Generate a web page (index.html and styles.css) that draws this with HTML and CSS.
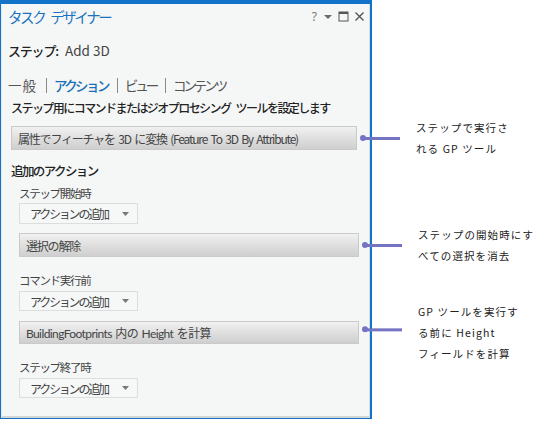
FILE: index.html
```html
<!DOCTYPE html>
<html lang="ja">
<head>
<meta charset="utf-8">
<link rel="stylesheet" href="styles.css">
</head>
<body>
<div class="frame">
  <div class="inner">
    <div class="titlebar">
      <span class="title">タスク デザイナー</span>
      <div class="tools">
        <span class="help">?</span>
        <svg width="10" height="10" viewBox="0 0 10 10"><path d="M1 3h8l-4 4z" fill="#6a6a6a"/></svg>
        <svg width="11" height="11" viewBox="0 0 11 11"><rect x="1" y="1" width="9" height="9" fill="none" stroke="#555" stroke-width="1"/><rect x="1" y="1" width="9" height="2" fill="#555"/></svg>
        <svg width="11" height="11" viewBox="0 0 11 11"><path d="M1.5 1.5l8 8M9.5 1.5l-8 8" stroke="#555" stroke-width="1.4"/></svg>
      </div>
    </div>

    <div class="step"><span class="step-label">ステップ:</span><span class="step-name">Add 3D</span></div>

    <div class="tabs">
      <span class="tab kanji">一般</span><span class="sep"></span>
      <span class="tab active">アクション</span><span class="sep"></span>
      <span class="tab">ビュー</span><span class="sep"></span>
      <span class="tab">コンテンツ</span>
    </div>

    <div class="heading">ステップ用にコマンドまたはジオプロセシング ツールを設定します</div>

    <div class="bar bar-main">属性でフィーチャを 3D に変換 (Feature To 3D By Attribute)
      <div class="callout c1"><span class="dot"></span><span class="line"></span><div class="note">ステップで実行さ<br>れる GP ツール</div></div>
    </div>

    <div class="section">追加のアクション</div>

    <div class="sub">ステップ開始時</div>
    <div class="dropdown"><span>アクションの追加</span><svg width="7" height="4" viewBox="0 0 7 4"><path d="M0 0h7L3.5 4z" fill="#777"/></svg></div>

    <div class="bar bar-sub b2">選択の解除
      <div class="callout c2"><span class="dot"></span><span class="line"></span><div class="note">ステップの開始時にす<br>べての選択を消去</div></div>
    </div>

    <div class="sub s2">コマンド実行前</div>
    <div class="dropdown d2"><span>アクションの追加</span><svg width="7" height="4" viewBox="0 0 7 4"><path d="M0 0h7L3.5 4z" fill="#777"/></svg></div>

    <div class="bar bar-sub b3">BuildingFootprints 内の Height を計算
      <div class="callout c3"><span class="dot"></span><span class="line"></span><div class="note">GP ツールを実行す<br>る前に Height<br>フィールドを計算</div></div>
    </div>

    <div class="sub s2">ステップ終了時</div>
    <div class="dropdown d2"><span>アクションの追加</span><svg width="7" height="4" viewBox="0 0 7 4"><path d="M0 0h7L3.5 4z" fill="#777"/></svg></div>
  </div>
</div>
</body>
</html>
```

FILE: styles.css
```css
* { box-sizing: border-box; }
html, body { margin: 0; padding: 0; background: #ffffff; }
body {
  font-family: "Noto Sans CJK JP", "Noto Sans", sans-serif;
  color: #3a3a3a;
  width: 545px;
  height: 421px;
  overflow: hidden;
}
.frame {
  width: 372px;
  height: 419px;
  border-top: 4px solid #1273c9;
  border-left: 1px solid #1273c9;
  border-right: 2px solid #1273c9;
  border-bottom: 1px solid #1273c9;
  background: #ffffff;
}
.inner {
  height: 100%;
  background: #f5f7f7;
  border-left: 1px solid #e6eaea;
  border-bottom: 2px solid #d4d6d6;
  border-right: 1px solid #d9dcdc;
  padding-left: 6px;
}
.titlebar {
  height: 24px;
  display: flex;
  align-items: center;
  justify-content: space-between;
  padding-right: 4px;
}
.title {
  font-size: 14.5px;
  color: #1c72c0;
  letter-spacing: -2.4px;
  margin-top: 1px;
  word-spacing: 5px;
}
.tools {
  display: flex;
  align-items: center;
  gap: 5px;
  margin-top: 1px;
}
.help {
  font-family: "Noto Sans", sans-serif;
  font-size: 12px;
  color: #777;
  margin-right: 1px;
}
.step {
  margin-top: 12px;
  height: 20px;
  display: flex;
  align-items: center;
  font-size: 13px;
}
.step-label { font-weight: 500; color: #222; letter-spacing: -1.2px; width: 57px; }
.step-name { color: #444; font-size: 13.5px; }
.tabs {
  margin-top: 15px;
  height: 20px;
  display: flex;
  align-items: center;
  font-size: 13.5px;
  color: #555;
  letter-spacing: -3.1px;
}
.tab.kanji { letter-spacing: 1px; }
.tab.active { color: #1b6fb8; font-weight: 500; letter-spacing: -2.6px; }
.sep {
  width: 1px;
  height: 15px;
  background: #8a8a8a;
  margin: 0 7px 0 9px;
}
.heading {
  margin-top: 4px;
  margin-left: 3px;
  height: 18px;
  font-size: 12px;
  font-weight: 500;
  color: #222;
  letter-spacing: -1.55px;
  word-spacing: 4px;
  line-height: 18px;
  white-space: nowrap;
}
.bar {
  position: relative;
  height: 24px;
  border: 1px solid #cacaca;
  background: linear-gradient(#f1f1f1, #dcdcdc 60%, #cfcfcf);
  font-size: 12px;
  color: #444;
  display: flex;
  align-items: center;
  padding-left: 6px;
  white-space: nowrap;
  letter-spacing: -1.2px;
  word-spacing: 2px;
}
.bar-main {
  margin-top: 9px;
  margin-left: 3px;
  width: 346px;
}
.bar-sub {
  margin-left: 11px;
  width: 340px;
}
.b2 { margin-top: 9px; }
.b3 {
  margin-top: 10px;
  height: 23px;
  font-family: Lato, "Noto Sans CJK JP", sans-serif;
  letter-spacing: -0.6px;
  word-spacing: 1px;
  font-size: 12px;
}
.section {
  margin-top: 12px;
  margin-left: 3px;
  height: 18px;
  line-height: 18px;
  font-size: 12.5px;
  font-weight: 500;
  color: #222;
  letter-spacing: -1.6px;
}
.sub {
  margin-top: 4px;
  margin-left: 11px;
  height: 18px;
  line-height: 18px;
  font-size: 11.5px;
  color: #444;
  letter-spacing: -1.3px;
}
.s2 { margin-top: 14px; }
.dropdown {
  margin-top: 1px;
  margin-left: 11px;
  width: 119px;
  height: 21px;
  border: 1px solid #dcdede;
  background: #f6f8f8;
  display: flex;
  align-items: center;
  justify-content: space-between;
  padding: 0 8px 0 10px;
  font-size: 12px;
  color: #444;
  letter-spacing: -2.2px;
}
.d2 { margin-top: 2px; height: 20px; }
.callout {
  position: absolute;
  left: calc(100% + 4px);
  top: 50%;
  transform: translateY(-50%);
  display: flex;
  align-items: center;
  letter-spacing: 0;
  word-spacing: 0;
  font-size: 12px;
  font-family: "Noto Sans CJK JP", sans-serif;
}
.c3 { transform: translateY(-55%); }
.dot {
  width: 6px;
  height: 6px;
  border-radius: 50%;
  background: #7474c2;
}
.line {
  width: 36px;
  height: 3px;
  background: #7474c2;
  margin-left: -2px;
}
.note {
  margin-left: 16px;
  font-size: 10.5px;
  line-height: 21px;
  letter-spacing: 1.1px;
  color: #222;
  white-space: nowrap;
}
.c3 .note { transform: translateY(3px); }
```
